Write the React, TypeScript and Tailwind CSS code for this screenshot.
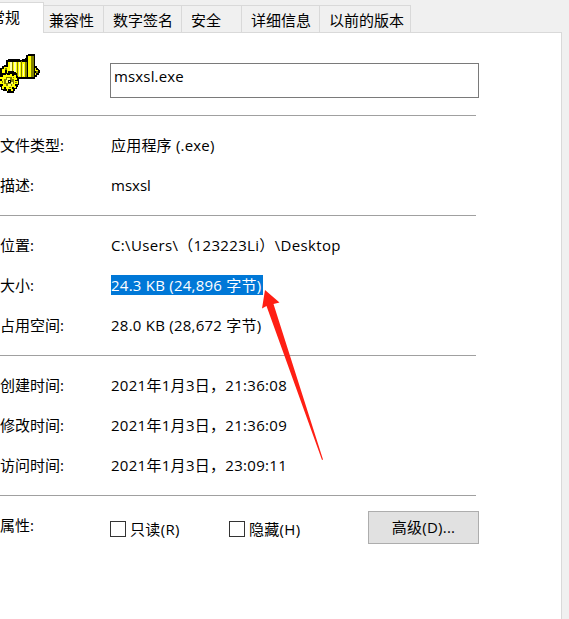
import type { ReactNode } from "react";

const Row = ({ label, tracking = "", children }: { label: string; tracking?: string; children: ReactNode }) => (
  <div className="flex h-10 items-center">
    <div className="w-[111px] shrink-0 whitespace-pre">{label}</div>
    <div className={`whitespace-pre ${tracking}`}>{children}</div>
  </div>
);

const Section = ({ children }: { children: ReactNode }) => (
  <section className="w-[476px] border-t border-[#a0a0a0] pt-[9px] pb-[10px]">{children}</section>
);

const tabs = [
  { text: "兼容性", box: "w-[60px] pl-[5px]" },
  { text: "数字签名", box: "w-[78px] pl-[9px]" },
  { text: "安全", box: "w-[60px] pl-[9px]" },
  { text: "详细信息", box: "w-[78px] pl-[9px]" },
  { text: "以前的版本", box: "w-[91px] pl-[9px]" },
];

const AppIcon = () => (
  <svg width="41" height="41" viewBox="0 0 41 41" className="block" shapeRendering="crispEdges">
    {/* casing, upright post and pointed nose */}
    <path d="M0 17V15H2V13H4V12H6V7H8V6H20V7H22V6H25V5H26V2H28V1H35V13H37V15H38V16H39V17H40V20H39V22H37V24H35V26H17V22H0Z" fill="#000" />
    <path d="M8 9H26V24H18V20H16V18H8V20H2V16H4V14H8Z" fill="#ffff00" />
    <path d="M28 3H31V24H28Z" fill="#ffff00" />
    <path d="M31 3H34V24H31Z" fill="#808000" />
    <path d="M35 15H36V17H38V20H36V22H35Z" fill="#ffff00" />
    <path d="M10 9H12V18H10ZM14 9H16V19H14ZM19 9H20V23H19ZM23 11H24V23H23Z" fill="#ffffb0" />
    <path d="M12 9H13V18H12ZM17 9H18V23H17ZM21 8H22V24H21ZM25 9H27V24H25ZM5 15H7V17H5ZM36 18H38V20H36Z" fill="#808000" />
    <path d="M5 17H7V19H5ZM35 18H36V20H35Z" fill="#000" />
    {/* gear */}
    <path d="M0 22H2V20H5V19H7V20H9V19H12V20H15V22H17V24H18V26H19V32H18V34H17V36H15V38H14V40H7V38H3V37H1V34H0Z" fill="#000" />
    <path d="M3 22H6V21H7V22H10V21H12V23H14V22H16V25H17V27H15V28H18V31H15V33H16V35H14V34H12V36H13V38H11V36H8V38H7V36H6V34H4V36H2V33H3V31H0V28H2V26H0V24H3Z" fill="#ffff00" />
    <path d="M6 24H12V26H14V31H12V33H6V31H4V26H6Z" fill="#808000" />
    <path d="M7 25H10V27H8V30H6V27H7ZM11 29H13V31H11V33H8V31H11Z" fill="#ffff60" />
    <path d="M8 27H11V30H8Z" fill="#000" />
    <path d="M9 28H10V29H9Z" fill="#fff" />
    <path d="M2 28H3V30H2ZM15 29H17V30H15ZM9 34H11V35H9ZM13 24H14V25H13Z" fill="#808000" />
  </svg>
);

export default function App() {
  return (
    <div className="relative h-[619px] w-[569px] overflow-hidden bg-[#f0f0f0] font-['Open_Sans','Noto_Sans_CJK_SC',sans-serif] text-[15px] leading-5 text-black">
      <div className="flex h-[33px] w-[562px] items-end">
        <div className="h-[31px] w-[44px] shrink-0 border-t border-r border-[#d9d9d9] bg-white pt-[4px]">
          <span className="-ml-[10px] inline-block whitespace-pre">常规</span>
        </div>
        {tabs.map((t) => (
          <div key={t.text} className={`h-7 shrink-0 border-t border-r border-b border-[#d9d9d9] pt-[4px] whitespace-pre ${t.box}`}>
            {t.text}
          </div>
        ))}
        <div className="h-px flex-1 bg-[#d9d9d9]" />
      </div>
      <main className="h-[586px] w-[562px] border-r border-[#d9d9d9] bg-white">
        <div className="flex h-[82px] items-start">
          <div className="w-[110px] shrink-0 pt-5">
            <AppIcon />
          </div>
          <div className="mt-[30px] h-[35px] w-[369px] border border-[#7a7a7a] pt-[2px] pl-[3px] tracking-[0.15px]">msxsl.exe</div>
        </div>
        <Section>
          <Row label="文件类型:" tracking="tracking-[0.2px]">应用程序 (.exe)</Row>
          <Row label="描述:">msxsl</Row>
        </Section>
        <Section>
          <Row label="位置:" tracking="tracking-[0.34px]">C:\Users\（123223Li）\Desktop</Row>
          <Row label="大小:">
            <span className="block h-5 w-[152px] bg-[#0078d7] tracking-[0.24px] text-white">24.3 KB (24,896 字节)</span>
          </Row>
          <Row label="占用空间:" tracking="tracking-[0.24px]">28.0 KB (28,672 字节)</Row>
        </Section>
        <Section>
          <Row label="创建时间:" tracking="tracking-[0.29px]">2021年1月3日，21:36:08</Row>
          <Row label="修改时间:" tracking="tracking-[0.29px]">2021年1月3日，21:36:09</Row>
          <Row label="访问时间:" tracking="tracking-[0.29px]">2021年1月3日，23:09:11</Row>
        </Section>
        <section className="w-[479px]">
          <div className="h-px w-[476px] bg-[#a0a0a0]" />
          <div className="flex items-start">
            <div className="mt-[19px] w-[110px]">属性:</div>
            <label className="mt-[23px] flex w-[119px] items-center gap-1 tracking-[0.35px]">
              <span className="h-4 w-4 border border-[#333]" />
              只读(R)
            </label>
            <label className="mt-[23px] flex w-[139px] items-center gap-1 tracking-[0.3px]">
              <span className="h-4 w-4 border border-[#333]" />
              隐藏(H)
            </label>
            <button className="mt-[15px] h-[33px] w-[111px] border border-[#adadad] bg-[#e1e1e1] pb-px tracking-[0.25px]">高级(D)...</button>
          </div>
        </section>
      </main>
      <svg className="absolute top-[288px] left-[260px]" width="64" height="174" viewBox="260 288 64 174">
        <path d="M265 290L279.500 302.500L273.500 304L323 459.500L322 460L266.500 306L262 308.500Z" fill="#ff1f14" />
      </svg>
    </div>
  );
}
